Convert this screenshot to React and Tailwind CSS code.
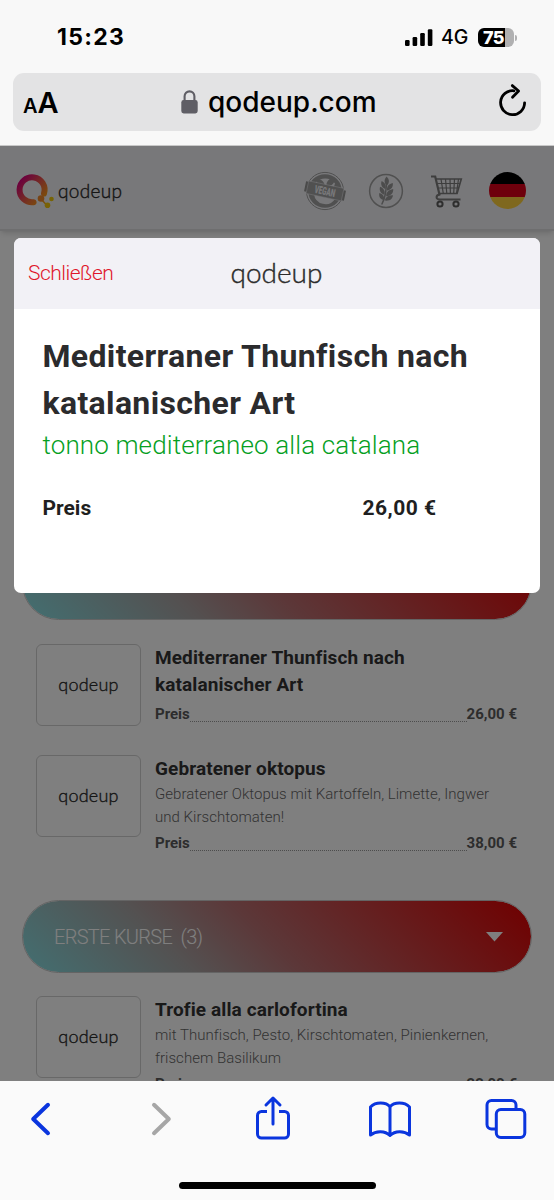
import React from "react";

const fish = [
  {
    title: "Mediterraner Thunfisch nach katalanischer Art",
    price: "26,00 €",
  },
  {
    title: "Gebratener oktopus",
    text: "Gebratener Oktopus mit Kartoffeln, Limette, Ingwer und Kirschtomaten!",
    price: "38,00 €",
  },
];

const firstCourses = [
  {
    title: "Trofie alla carlofortina",
    text: "mit Thunfisch, Pesto, Kirschtomaten, Pinienkernen, frischem Basilikum",
    price: "22,00 €",
  },
];

function StatusBar() {
  return (
    <div className="flex h-[73px] items-center pl-[57px] pr-[37px] pt-0.5 font-['Inter',sans-serif] text-black">
      <span className="text-[23px] font-bold leading-none tracking-[1.3px]">15:23</span>
      <svg className="ml-auto" width="28" height="18" viewBox="0 0 28 18">
        <rect x="0" y="11" width="4.6" height="6" rx="1.2" />
        <rect x="7.6" y="8" width="4.6" height="9" rx="1.2" />
        <rect x="15.2" y="4" width="4.6" height="13" rx="1.2" />
        <rect x="22.8" y="0.3" width="4.6" height="16.7" rx="1.2" />
      </svg>
      <span className="ml-2 w-[37px] pt-px text-[19.5px] font-medium leading-none">4G</span>
      <div className="flex h-[19px] w-[36px] items-center rounded-md bg-linear-to-r from-black from-75% to-[#b0b0b1] to-75% pl-[5px]">
        <span className="text-[18px] font-extrabold leading-none tracking-[-0.7px] text-white">75</span>
      </div>
      <div className="ml-px h-1.5 w-0.5 rounded-r-full bg-[#b0b0b1]" />
    </div>
  );
}

function AddressBar() {
  return (
    <div className="mx-[13px] flex h-[58px] items-center rounded-[11px] bg-[#e3e3e4] pl-2.5 pr-[13px] font-['Inter',sans-serif] text-black">
      <div className="flex w-[158px] items-baseline font-semibold leading-none">
        <span className="text-[20px]">A</span>
        <span className="text-[29px]">A</span>
      </div>
      <svg width="17" height="24" viewBox="0 0 17 24">
        <rect x="0.3" y="10" width="16.4" height="13.4" rx="2.4" fill="#5f5e65" />
        <path d="M3.6 11V6.3a4.9 4.9 0 0 1 9.8 0V11" fill="none" stroke="#5f5e65" strokeWidth="2.1" />
      </svg>
      <span className="ml-2.5 text-[28px] font-medium leading-none">qodeup.com</span>
      <svg className="mb-1 ml-auto" width="30" height="34" viewBox="0 0 30 34" fill="none" stroke="#000" strokeWidth="2.8" strokeLinecap="round" strokeLinejoin="round">
        <path d="M16 7.800A12 12 0 1 0 26.600 19.800" />
        <path d="M14.300 2.600l6.300 5.400-6.100 6.200" />
      </svg>
    </div>
  );
}

function SiteHeader() {
  return (
    <header className="flex h-[85px] items-center border-b-2 border-[#dcdcdf] bg-[#f1f1f5] pl-4 pr-[28px] pt-1.5 shadow-md">
      <svg width="39" height="36" viewBox="0 0 39 36" fill="none">
        <defs>
          <linearGradient id="ring" x1="2" y1="4" x2="32" y2="30" gradientUnits="userSpaceOnUse">
            <stop offset="0.1" stopColor="#d8007c" />
            <stop offset="0.6" stopColor="#ee6d3c" />
            <stop offset="1" stopColor="#ffb400" />
          </linearGradient>
        </defs>
        <path d="M28 20.500A12.500 12.500 0 1 0 17.600 29.200" stroke="url(#ring)" strokeWidth="6" strokeLinecap="round" />
        <path d="M25 26l6.500 7" stroke="#f2a31c" strokeWidth="1.5" />
        <circle cx="25" cy="25.500" r="3.300" fill="#f0892a" />
        <circle cx="31.500" cy="32.300" r="2.800" fill="#f2c40c" />
        <circle cx="35.500" cy="26" r="2.300" fill="#efc80a" />
      </svg>
      <Logo className="ml-[3px] text-[19px] leading-[24px] tracking-[0.3px]" />

      <svg className="ml-auto" width="42" height="40" viewBox="0 0 42 40">
        <circle cx="21" cy="20" r="18.600" fill="none" stroke="#a0a0a0" strokeWidth="1" />
        <circle cx="21" cy="20" r="16.800" fill="#a0a0a0" />
        <path d="M10 23a11.500 11.500 0 0 0 21 5z" fill="#f1f1f5" />
        <path d="M11.500 12.500a12 12 0 0 1 19.500 0l-2 6-16-3z" fill="#f1f1f5" />
        <path d="M21 15c-1-5-4.500-7.500-8.500-6.500 0 4.500 4 7.500 8.500 6.500zM22.500 15c-.5-5 3.500-8.500 8.500-8 0 5-3.500 9-8.500 8z" fill="#a0a0a0" />
        <g transform="rotate(12 21 20)">
          <path d="M0.500 14.500h6v10h-6zM35.500 15.500h6v10h-6z" fill="#949494" />
          <rect x="3" y="13.500" width="36" height="12.800" fill="#a0a0a0" stroke="#f1f1f5" strokeWidth="0.500" />
          <text x="21" y="24" textAnchor="middle" fontFamily="Roboto, sans-serif" fontWeight="900" fontSize="11" textLength="21" lengthAdjust="spacingAndGlyphs" fill="#f1f1f5">VEGAN</text>
        </g>
      </svg>
      <svg className="ml-[22px]" width="36" height="36" viewBox="0 0 36 36">
        <circle cx="18" cy="18" r="16.400" fill="none" stroke="#a0a0a0" strokeWidth="1.500" />
        <g fill="#989898">
          <path d="M18.600 3.500c3 3 3 6.500 .3 9-3-2.500-3-6-.3-9z" />
          <path d="M13.600 8c3.500 1.700 4.800 4.500 3.800 8-3.500-1.200-5-4-3.800-8z" />
          <path d="M24.800 10c.5 4-1.500 6.800-5.800 7.500-.3-4 1.600-6.600 5.800-7.500z" />
          <path d="M12 13.800c3.800 1.500 5.400 4.200 4.500 8-3.800-1.200-5.500-4-4.500-8z" />
          <path d="M25.200 16c.3 4-2 6.700-7 7.300 0-4 2.200-6.500 7-7.300z" />
          <path d="M11.300 20c4 1 5 3.400 4.800 7-4-.7-5.500-3.200-4.800-7z" />
          <path d="M25 22.300c-.5 4-3.500 6-8.300 5.300 1-3.700 3.800-5.500 8.300-5.300z" />
        </g>
        <path d="M18.600 9C18 18 17.600 24 13.700 31.500" fill="none" stroke="#989898" strokeWidth="1.500" />
      </svg>
      <svg className="ml-[26px]" width="33" height="34" viewBox="0 0 33 34" fill="none" stroke="#7c7c7c" strokeWidth="1.600">
        <path d="M1 2.500h4.200l4.500 19" strokeWidth="2.200" />
        <path d="M6 5h25.300l-4.200 14.500H9.800" />
        <path d="M7.800 9.500h22M8.800 14h20M11 5l2.300 14.500M15.500 5l1.300 14.500M20 5l.4 14.500M24.500 5l-.8 14.500M28.500 5l-2 14.500" strokeWidth="1.200" />
        <path d="M9.500 20.500c-4 .8-4 5 .5 5h20.500" strokeWidth="2" />
        <circle cx="10" cy="30" r="2.600" stroke="#5c5c5c" strokeWidth="2" />
        <circle cx="26" cy="30" r="2.600" stroke="#5c5c5c" strokeWidth="2" />
      </svg>
      <div className="ml-[26px] flex size-[37px] flex-col overflow-hidden rounded-full">
        <div className="flex-1 bg-black" />
        <div className="flex-1 bg-[#dd0018]" />
        <div className="flex-1 bg-[#ffd03c]" />
      </div>
    </header>
  );
}

function Logo({ className }) {
  return (
    <span className={`font-['Lato',sans-serif] font-light text-[#2b2b2b] [-webkit-text-stroke:0.4px_#2b2b2b] ${className}`}>
      qodeup
    </span>
  );
}

function CategoryBar({ children }) {
  return (
    <div className="mx-[22px] flex h-[73px] items-center justify-between rounded-full border border-[#c8c8c8] bg-[linear-gradient(45deg,#86dfe3_0%,#a8a2a2_30%,#b87072_48%,#e00000_100%)] bg-clip-padding pl-[31px] pr-[28px]">
      {children}
    </div>
  );
}

function MenuItem({ item }) {
  return (
    <div className="flex items-start gap-[14px] pl-[36px] pr-[37px]">
      <div className="flex h-[82px] w-[105px] shrink-0 items-center justify-center rounded-md border border-[#d0d0d0] pb-0.5">
        <Logo className="text-[18px] leading-none tracking-[0.2px]" />
      </div>
      <div className="flex-1">
        <h3 className="w-[270px] text-[19px] font-bold leading-[27px] tracking-[0.1px] text-[#333]">{item.title}</h3>
        {item.text && <p className="-mb-0.5 mt-px w-[345px] text-[15px] font-light leading-[23px] tracking-[0.03px] text-[#666]">{item.text}</p>}
        <div className="mt-[5px] flex h-[23px] text-[15px] font-bold leading-[23px] text-[#5a5a5a]">
          <span>Preis</span>
          <span className="mb-1 flex-1 border-b border-dotted border-[#999]" />
          <span>{item.price}</span>
        </div>
      </div>
    </div>
  );
}

function DishModal() {
  return (
    <div className="ml-[13.5px] mt-[92px] h-[355px] w-[526.5px] overflow-hidden rounded-[7px] bg-white">
      <div className="grid h-[71px] grid-cols-3 items-center bg-[#f2f1f6] pl-[14.5px]">
        <span className="text-[21px] font-light tracking-[-0.5px] text-[#e0162b]">Schließen</span>
        <Logo className="-ml-[15px] pb-[3px] text-center text-[28px] leading-none" />
      </div>
      <div className="pl-[29px] pt-6">
        <h2 className="w-[440px] text-[32px] font-bold leading-[47px] tracking-[0.35px] text-[#2b2b2d]">
          Mediterraner Thunfisch nach katalanischer Art
        </h2>
        <p className="text-[26px] font-light leading-9 tracking-[0.12px] text-[#069f1f]">tonno mediterraneo alla catalana</p>
        <div className="mt-[30px] flex text-[21px] font-bold leading-[30px] text-[#1f1f21]">
          <span className="w-[320px]">Preis</span>
          <span className="tracking-[0.5px]">26,00 €</span>
        </div>
      </div>
    </div>
  );
}

function Toolbar() {
  return (
    <nav className="flex h-[119px] flex-col items-center bg-[#fafafa]">
      <div className="flex h-[75px] w-full items-center justify-between pl-[18px] pr-[26px] text-[#0a35de]">
        <div className="flex w-11 justify-center">
          <svg width="22" height="38" viewBox="0 0 22 38" fill="none" stroke="currentColor" strokeWidth="4" strokeLinecap="round" strokeLinejoin="round">
            <path d="M19 4.800L4.200 19 19 33.200" />
          </svg>
        </div>
        <div className="flex w-11 justify-end pr-1.5">
          <svg className="text-[#a6a6a6]" width="22" height="38" viewBox="0 0 22 38" fill="none" stroke="currentColor" strokeWidth="4" strokeLinecap="round" strokeLinejoin="round">
            <path d="M3 4.800L17.800 19 3 33.200" />
          </svg>
        </div>
        <div className="flex w-11 justify-center pb-1">
          <svg width="36" height="46" viewBox="0 0 36 46" fill="none" stroke="currentColor" strokeWidth="3" strokeLinecap="round" strokeLinejoin="round">
            <path d="M12 17.500H6.500a4 4 0 0 0-4 4V40a4 4 0 0 0 4 4h23a4 4 0 0 0 4-4V21.500a4 4 0 0 0-4-4H24" strokeLinecap="butt" />
            <path d="M18 30V4.500M11 11l7-7 7 7" />
          </svg>
        </div>
        <svg width="44" height="38" viewBox="0 0 44 38" fill="none" stroke="currentColor" strokeWidth="3" strokeLinejoin="round" strokeLinecap="round">
          <path d="M22 7C18 1.800 7.500 1.800 2.500 7v28C8 30.500 17 30.500 22 35.500 27 30.500 36 30.500 41.500 35V7C36.500 1.800 26 1.800 22 7zM22 7v28" />
        </svg>
        <svg width="44" height="42" viewBox="0 0 44 42" fill="none" stroke="currentColor" strokeWidth="3">
          <rect x="12.300" y="11.500" width="28.500" height="28" rx="4.500" />
          <path d="M32 11.500V7a4.500 4.500 0 0 0-4.500-4.500H7.500A4.500 4.500 0 0 0 3 7v19.500A4.500 4.500 0 0 0 7.500 31h4.800" />
        </svg>
      </div>
      <div className="mt-[26px] h-[7px] w-[197px] rounded-full bg-black" />
    </nav>
  );
}

function App() {
  return (
    <div className="h-[1200px] w-[554px] overflow-hidden bg-[#f8f8f8] font-['Roboto',sans-serif]">
      <div className="h-[145px]">
        <StatusBar />
        <AddressBar />
      </div>

      <main className="relative h-[936px] overflow-hidden border-t border-[#c8c8c8] bg-white">
        <SiteHeader />
        <div className="flex flex-col pt-[316px]">
          <CategoryBar />
          <div className="mt-6 flex flex-col gap-[29px]">
            {fish.map((item) => <MenuItem key={item.title} item={item} />)}
          </div>
          <div className="mt-[45px]">
            <CategoryBar>
              <span className="whitespace-pre text-[20px] font-light tracking-[-0.7px] text-white">ERSTE KURSE  (3)</span>
              <svg width="17" height="10" viewBox="0 0 17 10" fill="#fff">
                <path d="M0 0h17L8.500 9.500z" />
              </svg>
            </CategoryBar>
          </div>
          <div className="mt-[23px]">
            {firstCourses.map((item) => <MenuItem key={item.title} item={item} />)}
          </div>
        </div>

        <div className="absolute inset-0 flex items-start bg-black/50">
          <DishModal />
        </div>
      </main>

      <Toolbar />
    </div>
  );
}

export default App;
